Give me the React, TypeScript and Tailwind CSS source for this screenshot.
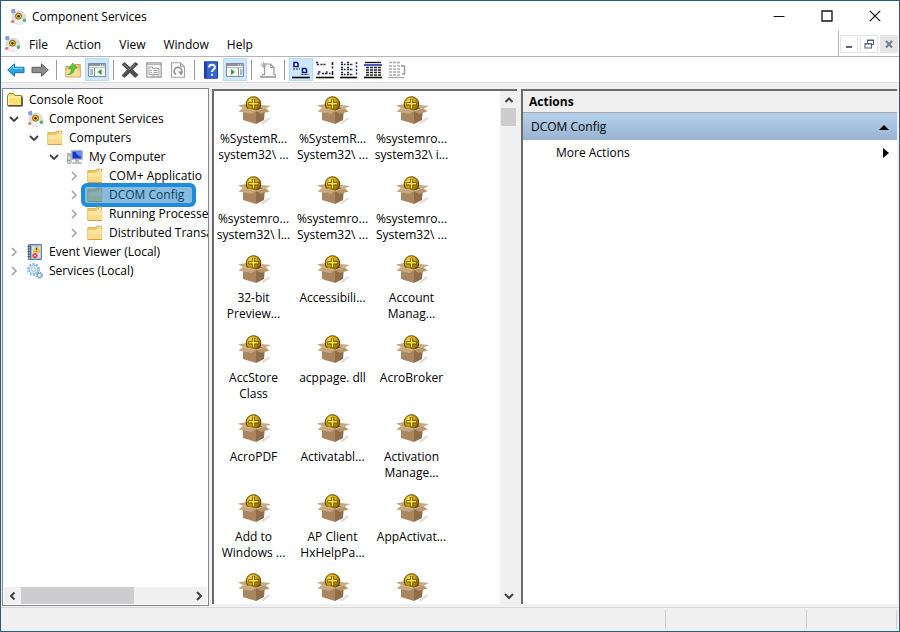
import React, { ReactNode } from "react";

type IconProps = { className?: string };

function Svg({ children, className = "size-4", box = "0 0 16 16" }: { children: ReactNode; className?: string; box?: string }) {
  return (
    <svg viewBox={box} className={`shrink-0 ${className}`} fill="none" aria-hidden="true">
      {children}
    </svg>
  );
}

/* ---------- Application and tree icons ---------- */

function ComponentIcon({ className }: IconProps) {
  return (
    <Svg className={className}>
      <ellipse cx="9" cy="8.800" rx="6.900" ry="6.600" fill="#dcdde1" stroke="#c6c9d0" strokeWidth="0.6" />
      <ellipse cx="9.500" cy="12.500" rx="4.600" ry="2.400" fill="#f3f3f5" />
      <path d="M1.500 1l3-1 .5 3.600-3 .4z" fill="#8ba2e6" stroke="#5f7bcf" strokeWidth="0.6" />
      <circle cx="2.600" cy="12.500" r="1.600" fill="#e0756c" />
      <circle cx="14.400" cy="11.200" r="1.700" fill="#4db75a" />
      <circle cx="8.500" cy="7.200" r="3" fill="#f0c02a" stroke="#8a671c" strokeWidth="1" />
      <circle cx="8.500" cy="7.200" r="1.200" fill="#3c2b05" />
    </Svg>
  );
}

function RootFolderIcon() {
  return (
    <Svg>
      <path d="M.5 13.5v-10l1.5-2h4.5l1.5 2h6.5v10z" fill="#f7e272" stroke="#8d8238" />
      <path d="M1.5 5h12.5M1.5 4.5v8.5" stroke="#fff8c4" />
      <path d="M15.200 4.500v9.500h-14" stroke="#222" />
    </Svg>
  );
}

function FolderIcon() {
  return (
    <Svg>
      <path d="M.8 14.4V2.6h7.6l1-1.6h5.3v13.4z" fill="#efc663" stroke="#d6a844" strokeWidth="0.8" />
      <path d="M10 1.8h4v1.4h-4z" fill="#fff6dc" />
      <path d="M10.6 2.1h1.6v.8h-1.6z" fill="#5aa9e0" />
      <path d="M1.2 5h8l1.2-1.3h4.4v10.4H1.2z" fill="#fde59f" />
      <path d="M1.2 9h13.6v5.1H1.2z" fill="#f9da88" />
      <path d="M1 14.5h14" stroke="#d3a23c" />
    </Svg>
  );
}

function ComputerIcon() {
  return (
    <Svg>
      <path d="M.5 4.5h3.6v9.8H.5z" fill="#d9dce0" stroke="#9499a2" strokeWidth="0.8" />
      <path d="M1.2 6.2h2.2" stroke="#777" strokeWidth="0.8" />
      <path d="M1.4 11.5h1.6" stroke="#43b455" strokeWidth="1.4" />
      <path d="M4.4 1.4h11v9.2h-11z" fill="#cfd6e6" stroke="#a2abc0" strokeWidth="0.8" />
      <path d="M5.4 2.4h9v7.2h-9z" fill="#1437c8" />
      <path d="M8.4 2.4h6v5.4c-3-.6-5-2.4-6-5.4z" fill="#5e8df2" />
      <path d="M8.6 10.8h3l.6 2H8z" fill="#a7aeba" />
      <path d="M5.6 13.4h9v1.2h-9z" fill="#c4c8d0" stroke="#9aa0ab" strokeWidth="0.5" />
    </Svg>
  );
}

function EventViewerIcon() {
  return (
    <Svg>
      <path d="M1.5.5h13v15h-13z" fill="#a8c0dc" stroke="#5e7ca3" />
      <path d="M3.5 1v14" stroke="#50698c" strokeWidth="1.2" />
      <path d="M.5 2.5h2.5M.5 5h2.5M.5 7.500h2.500M.5 10h2.500M.5 12.500h2.500" stroke="#49515e" strokeWidth="0.9" />
      <path d="M5 2.500h8.500v11H5z" fill="#dbe6f2" />
      <path d="M9.600 1.800l3.600 6.200H6z" fill="#ffd22e" stroke="#c99a12" strokeWidth="0.6" />
      <path d="M9.600 3.800v2.400M9.600 6.700v.8" stroke="#222" strokeWidth="0.9" />
      <circle cx="8" cy="11.500" r="2.600" fill="#db3b21" />
      <path d="M7 10.500l2 2M9 10.500l-2 2" stroke="#fff" strokeWidth="0.9" />
    </Svg>
  );
}

function ServicesIcon() {
  return (
    <Svg>
      <circle cx="6.500" cy="6.500" r="5.600" stroke="#8fbbe0" strokeWidth="1.800" strokeDasharray="2.200 1.320" />
      <circle cx="6.500" cy="6.500" r="4.300" fill="#d8ebf9" stroke="#7eb0da" strokeWidth="0.900" />
      <circle cx="6.500" cy="6.500" r="1.900" fill="#fff" stroke="#8ab6dc" strokeWidth="0.800" />
      <circle cx="12.500" cy="12.300" r="2.900" stroke="#6f97bd" strokeWidth="1.200" strokeDasharray="1.300 0.980" />
      <circle cx="12.500" cy="12.300" r="2.100" fill="#cfe3f4" stroke="#5f8db8" strokeWidth="0.800" />
      <circle cx="12.500" cy="12.300" r="0.800" fill="#fff" />
    </Svg>
  );
}

function PackageIcon() {
  return (
    <Svg box="0 0 34 30" className="h-[30px] w-[34px]">
      <defs>
        <radialGradient id="ball" cx="0.35" cy="0.3" r="0.8">
          <stop offset="0" stopColor="#fbe23c" />
          <stop offset="0.5" stopColor="#cf9e06" />
          <stop offset="1" stopColor="#6e5000" />
        </radialGradient>
      </defs>
      <path d="M24 27l7-5.500 2.500 1L26 28.500z" fill="#dedede" />
      <path d="M7 12l10-2.500 11 2-9 4z" fill="#7d6140" />
      <path d="M1 9.500l8.500-1.500 7 2-9.500 2.500z" fill="#c4a67c" />
      <path d="M20 8.500L34 10l-6.500 3-9-3z" fill="#c9aa7e" />
      <circle cx="16.500" cy="8" r="7.300" fill="url(#ball)" stroke="#4e3a04" strokeWidth="0.900" />
      <path d="M16.500 3v9.500M11.500 7.800h10" stroke="#5b4302" strokeWidth="3.200" />
      <path d="M16.500 3.300v9M12 7.800h9" stroke="#ffe93c" strokeWidth="1.600" />
      <path d="M6 12l13 3v13L6 24z" fill="#a98660" />
      <path d="M19 15l9-3-1 12-8 4z" fill="#8e6d48" />
      <path d="M6 12l13 3-4.500 3L1.500 15.500z" fill="#c7a77e" />
      <path d="M19 15l9-3 4.500 3.500-8.500 2.500z" fill="#b8966b" />
      <path d="M6 12l13 3 9-3" stroke="#dac09a" strokeWidth="0.800" />
    </Svg>
  );
}

/* ---------- Toolbar icons ---------- */

function ArrowIcon({ forward = false }: { forward?: boolean }) {
  return (
    <Svg className="h-4 w-[18px]" box="0 0 18 16">
      {forward ? (
        <path d="M17.300 8L10.500 1.800v3.500H1v5.400h9.500v3.500z" fill="#8d8d8d" stroke="#5f5f5f" strokeLinejoin="round" />
      ) : (
        <>
          <path d="M.7 8l6.800-6.200v3.500H17v5.400H7.500v3.500z" fill="#2aa3e8" stroke="#1670b4" strokeLinejoin="round" />
          <path d="M2.500 7.600l4-3.500v2.300H16" stroke="#8ad4fa" />
        </>
      )}
    </Svg>
  );
}

function UpFolderIcon() {
  return (
    <Svg>
      <path d="M.8 15V4.500h8l1.500-2h5v12.500z" fill="#e9c168" stroke="#b9934a" strokeWidth="0.800" />
      <path d="M1.200 7.500h13.600v7.100H1.200z" fill="#fbe09a" />
      <path d="M2.500 12.500c3-.8 4-3 3.800-6L3.500 6.800 7.800 1l4.200 4.800-2.700.4c.3 4-2.300 6.600-6.800 6.300z" fill="#55cc33" stroke="#3b9a28" strokeWidth="0.600" />
    </Svg>
  );
}

function PaneIcon({ side }: { side: "left" | "right" }) {
  return (
    <Svg className="h-4 w-[18px]" box="0 0 18 16">
      <path d="M.5 1.500h17v13H.5z" fill="#f7f7f7" stroke="#868b92" />
      <path d="M1 2h16v2H1z" fill="#8f959c" />
      <path d="M12 3h1M14 3h1M16 3h.5" stroke="#fff" />
      <path d="M1 5.500h16" stroke="#b9bec4" />
      {side === "left" ? (
        <>
          <path d="M6.500 6v8.500" stroke="#868b92" />
          <path d="M2 8h3M2 10h3M2 12h3" stroke="#4a89c8" />
          <path d="M13.500 7v6l-4-3z" fill="#2fa52a" />
        </>
      ) : (
        <>
          <path d="M12.500 6v8.500" stroke="#868b92" />
          <path d="M14 8h2.500M14 10h2.500M14 12h2.500" stroke="#4a89c8" />
          <path d="M5 7v6l4-3z" fill="#2fa52a" />
        </>
      )}
    </Svg>
  );
}

function DeleteIcon() {
  return (
    <Svg className="h-4 w-[18px]" box="0 0 18 16">
      <path d="M1 2.500L3.500.5 9 5.500l5-5 3 1.500-5.500 5.500L17 13l-3 2.500-5-5-5.500 5L1 13.500l5.500-5.800z" fill="#505050" stroke="#2e2e2e" strokeWidth="0.600" />
      <path d="M3 2.500l5.500 5L14 2" stroke="#8a8a8a" strokeWidth="0.900" />
    </Svg>
  );
}

function PropertiesIcon() {
  return (
    <Svg>
      <path d="M.8.8h14.400v14.400H.8z" fill="#f5f5f5" stroke="#9b9b9b" strokeWidth="1.200" />
      <path d="M1 2.300h14" stroke="#a5a5a5" />
      <path d="M3 12.500V5h3.500v1.500H13v6z" stroke="#a5a5a5" />
      <path d="M4.500 8.500h1.500M7.500 8.500h4M4.500 10.500h1.500M7.500 10.500h4M6 14h3M10.500 14h3" stroke="#a0a0a0" />
    </Svg>
  );
}

function RefreshIcon() {
  return (
    <Svg>
      <path d="M1.500.8h9l4 4v10.500h-13z" fill="#fafafa" stroke="#a3a3a3" strokeWidth="1.100" />
      <path d="M10.500.8v4h4" stroke="#a3a3a3" />
      <path d="M6 12.300A3.700 3.700 0 1 1 11.500 10" stroke="#8d8d8d" strokeWidth="1.500" />
      <path d="M8.300 9.500h5L11 13.500z" fill="#8d8d8d" />
    </Svg>
  );
}

function HelpIcon() {
  return (
    <Svg className="h-[18px] w-4" box="0 0 16 18">
      <path d="M1.500.8h13v16.400h-13z" fill="#3466d6" stroke="#1a3c9e" />
      <path d="M3 1v16" stroke="#17327f" strokeWidth="1.200" />
      <path d="M6 6.500c0-3.700 6-3.500 6-.3 0 2-3 2.300-3 4.800M9 12.800v1.900" stroke="#fff" strokeWidth="1.900" />
    </Svg>
  );
}

function ExportIcon() {
  return (
    <Svg className="h-[18px] w-[18px]" box="0 0 18 18">
      <path d="M5.500 14V3h6l3.500 3.500V14" fill="#fafafa" stroke="#989898" strokeWidth="1.200" />
      <path d="M11.500 3v3.500h3.500" stroke="#989898" />
      <path d="M4.500 1v6M1.500 4h6M2.300 1.900l4.400 4.200M6.700 1.900L2.300 6.100" stroke="#aaa" strokeWidth="0.900" />
      <path d="M1 16h16" stroke="#989898" strokeWidth="1.600" />
      <path d="M5.500 13.500H3.500v2M15 13.500h1.500v2" stroke="#989898" />
    </Svg>
  );
}

function LargeIconsIcon() {
  return (
    <Svg className="h-[18px] w-[18px]" box="0 0 18 18">
      <path d="M2 1.500h3l1 1V5.500H2zM10.500 7.500h3l1 1v3h-4z" fill="#fff" stroke="#0a1a8c" strokeWidth="1.600" />
      <path d="M1 8h7M9.500 13.500h7" stroke="#222" strokeWidth="1.200" strokeDasharray="2 1" />
      <path d="M0 16.500h18" stroke="#000" strokeWidth="1.600" />
    </Svg>
  );
}

function SmallIconsIcon() {
  return (
    <Svg className="h-[18px] w-[18px]" box="0 0 18 18">
      <path d="M0 1.500h2M1 3.500h2M2 11h2.500M1.500 13h2M10 11h1.500" stroke="#111b60" strokeWidth="1.400" />
      <path d="M16.500 1v3M16.500 5.500v2M16.500 10v4" stroke="#111b60" strokeWidth="1.600" />
      <path d="M4.500 3.500h2M7.500 3.500h2M6 12.500h2M9 12.500h2.500M13 12.500h1.500" stroke="#222" strokeWidth="1.600" />
      <path d="M0 16.500h18" stroke="#000" strokeWidth="1.600" />
    </Svg>
  );
}

function ListIcon() {
  return (
    <Svg className="h-[18px] w-[18px]" box="0 0 18 18">
      <path d="M1 1.500h2M7 1.500h2M1 6.500h2M7 6.500h2M1 11.500h2M7 11.500h2" stroke="#1428a0" strokeWidth="1.500" />
      <path d="M16.500 1v13.500" stroke="#1c2e90" strokeWidth="1.500" strokeDasharray="2 1.500" />
      <path d="M1 3.500h4.500M7 3.500h6M1 8.500h4.500M7 8.500h6M1 13.500h4.500M7 13.500h6" stroke="#222" strokeWidth="1.400" strokeDasharray="2 0.800" />
      <path d="M0 16.500h17" stroke="#000" strokeWidth="1.600" />
    </Svg>
  );
}

function DetailIcon() {
  return (
    <Svg className="h-[18px] w-[18px]" box="0 0 18 18">
      <path d="M1 1.500h16" stroke="#111" strokeWidth="1.300" />
      <path d="M0 4h18" stroke="#1a2fa8" strokeWidth="1.600" />
      <path d="M2 6.500h15M2 9h15M2 11.500h15M2 14h15" stroke="#222" strokeWidth="1.400" strokeDasharray="3 1" />
      <path d="M0 16.500h18" stroke="#000" strokeWidth="1.600" />
    </Svg>
  );
}

function CustomIcon() {
  return (
    <Svg className="h-[18px] w-[18px]" box="0 0 18 18">
      <path d="M1 1.500h12M1 5h13M1 8h12M1 11h12M1 14h12" stroke="#aaa" strokeWidth="1.300" strokeDasharray="3 1" />
      <path d="M13 5h3.500v8H14" stroke="#999" strokeWidth="1.400" />
      <path d="M0 16.500h16" stroke="#aaa" strokeWidth="1.300" />
    </Svg>
  );
}

/* ---------- Small controls ---------- */

const chevronPaths = {
  up: "M1.500 7L5 3.500l3.500 3.500",
  down: "M1 3l4 4 4-4",
  left: "M6.500 1.500L3 5l3.500 3.500",
  right: "M3 1l4 4-4 4",
};

function Chevron({ to, tone = "#404040", width = 1.8 }: { to: keyof typeof chevronPaths; tone?: string; width?: number }) {
  return (
    <Svg box="0 0 10 10" className="size-2.5">
      <path d={chevronPaths[to]} stroke={tone} strokeWidth={width} />
    </Svg>
  );
}

function Separator() {
  return <span className="flex h-5 w-[9px] justify-center"><span className="w-px bg-[#9a9a9a]" /></span>;
}

function ToolButton({ label, active, children }: { label: string; active?: boolean; children: ReactNode }) {
  return (
    <button
      type="button"
      aria-label={label}
      className={`flex h-[23px] w-6 items-center justify-center border ${active ? "border-[#b4dcf8] bg-[#cce8ff]" : "border-transparent"}`}
    >
      {children}
    </button>
  );
}

/* ---------- Sections ---------- */

function TitleBar() {
  return (
    <header className="flex h-[30px] shrink-0 items-center bg-white">
      <div className="flex flex-1 items-center gap-1.5 pl-[9px] pt-0.5">
        <ComponentIcon className="size-4" />
        <h1>Component Services</h1>
      </div>
      <button type="button" aria-label="Minimize" className="flex h-full w-12 items-center justify-center">
        <Svg className="size-3" box="0 0 12 12"><path d="M.5 6.500h11" stroke="#111" /></Svg>
      </button>
      <button type="button" aria-label="Maximize" className="flex h-full w-12 items-center justify-center">
        <Svg className="size-3" box="0 0 12 12"><path d="M1 1h10v10H1z" stroke="#111" strokeWidth="1.300" /></Svg>
      </button>
      <button type="button" aria-label="Close" className="flex h-full w-12 items-center justify-center">
        <Svg className="size-3" box="0 0 12 12"><path d="M.8.8l10.400 10.400M11.200.8L.8 11.200" stroke="#111" strokeWidth="1.200" /></Svg>
      </button>
    </header>
  );
}

function MenuBar() {
  return (
    <nav className="flex h-[26px] shrink-0 items-center border-b border-[#b4b4b4] bg-white pl-[3px]">
      <ComponentIcon className="size-4" />
      <div className="flex flex-1 pt-0.5">
        {["File", "Action", "View", "Window", "Help"].map((item) => (
          <button key={item} type="button" className="px-[9px]">{item}</button>
        ))}
      </div>
      <div className="flex h-full items-center gap-0.5 border-l border-[#b4b4b4] px-px">
        <button type="button" aria-label="Minimize document" className="flex size-[18px] items-center justify-center border border-[#e3e3e3]">
          <Svg className="size-3" box="0 0 12 12"><path d="M3 9h6" stroke="#51657f" strokeWidth="2" /></Svg>
        </button>
        <button type="button" aria-label="Restore document" className="flex size-[18px] items-center justify-center border border-[#e3e3e3]">
          <Svg className="size-3" box="0 0 12 12">
            <path d="M4.500 5V2h6v4.500H8.500M4 2.500h7M2 5.500h6.500V10H2zM1.500 6h7" stroke="#51657f" strokeWidth="1.100" />
          </Svg>
        </button>
        <button type="button" aria-label="Close document" className="flex size-[18px] items-center justify-center bg-[#e5e5e5]">
          <Svg className="size-3" box="0 0 12 12"><path d="M3 3l6 6.500M9 3L3 9.500" stroke="#6c7d94" strokeWidth="2" /></Svg>
        </button>
      </div>
    </nav>
  );
}

function Toolbar() {
  return (
    <div role="toolbar" aria-label="Standard" className="flex h-[26px] shrink-0 items-center border-b border-[#dcdcdc] bg-white pl-[3px]">
      <ToolButton label="Back"><ArrowIcon /></ToolButton>
      <ToolButton label="Forward"><ArrowIcon forward /></ToolButton>
      <Separator />
      <ToolButton label="Up one level"><UpFolderIcon /></ToolButton>
      <ToolButton label="Show or hide console tree" active><PaneIcon side="left" /></ToolButton>
      <Separator />
      <ToolButton label="Delete"><DeleteIcon /></ToolButton>
      <ToolButton label="Properties"><PropertiesIcon /></ToolButton>
      <ToolButton label="Refresh"><RefreshIcon /></ToolButton>
      <Separator />
      <ToolButton label="Help"><HelpIcon /></ToolButton>
      <ToolButton label="Show or hide action pane" active><PaneIcon side="right" /></ToolButton>
      <Separator />
      <ToolButton label="New"><ExportIcon /></ToolButton>
      <Separator />
      <ToolButton label="Large icons" active><LargeIconsIcon /></ToolButton>
      <ToolButton label="Small icons"><SmallIconsIcon /></ToolButton>
      <ToolButton label="List"><ListIcon /></ToolButton>
      <ToolButton label="Detail"><DetailIcon /></ToolButton>
      <ToolButton label="Custom"><CustomIcon /></ToolButton>
    </div>
  );
}

type Node = { label: string; icon: ReactNode; indent: string; open?: boolean; leaf?: boolean; selected?: boolean };

const nodes: Node[] = [
  { label: "Console Root", icon: <RootFolderIcon />, indent: "pl-1", leaf: true },
  { label: "Component Services", icon: <ComponentIcon className="size-4" />, indent: "pl-[5px]", open: true },
  { label: "Computers", icon: <FolderIcon />, indent: "pl-[25px]", open: true },
  { label: "My Computer", icon: <ComputerIcon />, indent: "pl-[45px]", open: true },
  { label: "COM+ Applicatio", icon: <FolderIcon />, indent: "pl-[65px]" },
  { label: "DCOM Config", icon: <FolderIcon />, indent: "pl-[65px]", selected: true },
  { label: "Running Processe", icon: <FolderIcon />, indent: "pl-[65px]" },
  { label: "Distributed Transa", icon: <FolderIcon />, indent: "pl-[65px]" },
  { label: "Event Viewer (Local)", icon: <EventViewerIcon />, indent: "pl-[5px]" },
  { label: "Services (Local)", icon: <ServicesIcon />, indent: "pl-[5px]" },
];

function TreePane() {
  return (
    <aside className="flex w-[207px] shrink-0 flex-col border border-[#828790] bg-white">
      <ul role="tree" className="min-h-0 flex-1 overflow-hidden pt-px">
        {nodes.map((node) => (
          <li key={node.label} role="treeitem" aria-selected={!!node.selected} className={`flex h-[19px] items-center whitespace-nowrap ${node.indent}`}>
            {!node.leaf && (
              <button type="button" aria-label={`Toggle ${node.label}`} className="mr-[7px] flex w-3 shrink-0 justify-center">
                {node.open ? <Chevron to="down" /> : <Chevron to="right" tone="#a0a0a0" width={1.5} />}
              </button>
            )}
            <button type="button" className="relative flex items-center gap-1.5">
              {node.icon}
              {node.label}
              {node.selected && (
                <span className="absolute -inset-y-1 -left-1.5 -right-3 rounded-md border-4 border-[#1f8bdc] bg-[#1478be]/50" />
              )}
            </button>
          </li>
        ))}
      </ul>
      <div className="mx-px mb-px flex h-[17px] shrink-0 bg-[#f0f0f0]">
        <button type="button" aria-label="Scroll left" className="flex w-[17px] items-center justify-center"><Chevron to="left" width={2} /></button>
        <div className="flex-1"><div className="h-full w-2/3 bg-[#cdcdcd]" /></div>
        <button type="button" aria-label="Scroll right" className="flex w-[17px] items-center justify-center"><Chevron to="right" width={2} /></button>
      </div>
    </aside>
  );
}

const items: string[][] = [
  ["%SystemR...", "system32\\ ..."],
  ["%SystemR...", "System32\\ ..."],
  ["%systemro...", "system32\\ i..."],
  ["%systemro...", "system32\\ l..."],
  ["%systemro...", "System32\\ ..."],
  ["%systemro...", "System32\\ ..."],
  ["32-bit", "Preview..."],
  ["Accessibili..."],
  ["Account", "Manag..."],
  ["AccStore", "Class"],
  ["acppage. dll"],
  ["AcroBroker"],
  ["AcroPDF"],
  ["Activatabl..."],
  ["Activation", "Manage..."],
  ["Add to", "Windows ..."],
  ["AP Client", "HxHelpPa..."],
  ["AppActivat..."],
  [],
  [],
  [],
];

const rows = Array.from({ length: Math.ceil(items.length / 3) }, (_, i) => items.slice(i * 3, i * 3 + 3));

function IconPane() {
  return (
    <main className="flex w-[305px] shrink-0 border-l-2 border-t-2 border-[#6b6b6b] bg-white">
      <div className="min-h-0 flex-1 overflow-hidden pt-[5px]">
        {rows.map((row, r) => (
          <div key={r} className="flex odd:h-20 even:h-[79px]">
            {row.map((lines, c) => (
              <button key={c} type="button" aria-label={lines.join(" ") || "Application"} className="flex w-[79px] shrink-0 flex-col items-center">
                <PackageIcon />
                <span className="mt-[5px] leading-4">
                  {lines.map((line, i) => (
                    <span key={i} className="block whitespace-nowrap">{line}</span>
                  ))}
                </span>
              </button>
            ))}
          </div>
        ))}
      </div>
      <div className="flex w-[17px] flex-col bg-[#f0f0f0]">
        <button type="button" aria-label="Scroll up" className="flex h-[17px] items-center justify-center"><Chevron to="up" width={2} /></button>
        <div className="flex-1 px-px"><div className="h-[18px] bg-[#cdcdcd]" /></div>
        <button type="button" aria-label="Scroll down" className="flex h-[17px] items-center justify-center"><Chevron to="down" width={2} /></button>
      </div>
    </main>
  );
}

function ActionsPane() {
  return (
    <section className="min-w-0 flex-1 border-l-2 border-t-2 border-[#6b6b6b] bg-white">
      <h2 className="flex h-[22px] items-center border-b border-[#a8a8a8] bg-[#f0f0f0] pl-[6px] font-bold">Actions</h2>
      <button type="button" className="flex h-[27px] w-full items-center justify-between bg-linear-to-b from-[#b5d1ea] to-[#98b4d2] pl-2 pr-2">
        DCOM Config
        <Svg box="0 0 10 6" className="h-1.5 w-2.5"><path d="M0 6l5-5 5 5z" fill="#000" /></Svg>
      </button>
      <button type="button" className="flex h-[26px] w-full items-center justify-between pl-[33px] pr-2">
        More Actions
        <Svg box="0 0 6 10" className="h-2.5 w-1.5"><path d="M0 0l6 5-6 5z" fill="#000" /></Svg>
      </button>
    </section>
  );
}

export default function App() {
  return (
    <div className="flex h-screen flex-col overflow-hidden border border-[#2a5b7a] bg-[#f0f0f0] font-['Open_Sans','Noto_Sans',sans-serif] text-xs leading-4 text-black">
      <TitleBar />
      <MenuBar />
      <Toolbar />
      <div className="flex min-h-0 flex-1 pl-px pr-0.5 pt-[5px]">
        <TreePane />
        <div className="flex min-w-0 flex-1 gap-1 pb-0.5 pl-[3px] pt-px">
          <IconPane />
          <ActionsPane />
        </div>
      </div>
      <footer className="mt-px flex h-6 shrink-0 border-t border-[#d9d9d9] py-0.5">
        <div className="flex-1 border-r border-[#d0d0d0]" />
        <div className="w-[141px] border-r border-[#d0d0d0]" />
        <div className="mr-0.5 w-[90px] border-r border-[#d0d0d0]" />
      </footer>
    </div>
  );
}
